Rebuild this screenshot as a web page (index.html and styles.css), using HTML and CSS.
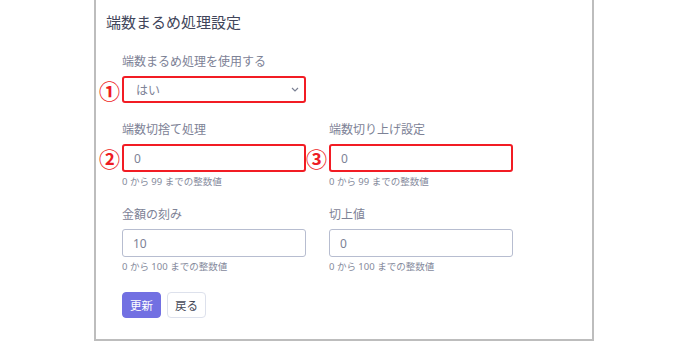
FILE: index.html
```html
<!DOCTYPE html>
<html lang="ja">
<head>
    <meta charset="UTF-8">
    <meta name="viewport" content="width=device-width, initial-scale=1.0">
    <title>端数まるめ処理設定</title>
    <link rel="stylesheet" href="styles.css">
</head>
<body>
    <div class="panel">
        <h1 class="title">端数まるめ処理設定</h1>
        <form class="form">
            <div class="row">
                <div class="field">
                    <label class="label">端数まるめ処理を使用する</label>
                    <div class="control">
                        <span class="mark">①</span>
                        <div class="select marked">
                            <span>はい</span>
                            <svg class="chevron" width="8" height="5" viewBox="0 0 8 5"><path d="M1 1l3 3 3-3" fill="none" stroke="#7b8194" stroke-width="1.2"/></svg>
                        </div>
                    </div>
                </div>
            </div>
            <div class="row">
                <div class="field">
                    <label class="label">端数切捨て処理</label>
                    <div class="control">
                        <span class="mark">②</span>
                        <input class="input marked" type="text" value="0">
                    </div>
                    <p class="hint">0 から 99 までの整数値</p>
                </div>
                <div class="field">
                    <label class="label">端数切り上げ設定</label>
                    <div class="control">
                        <span class="mark">③</span>
                        <input class="input marked" type="text" value="0">
                    </div>
                    <p class="hint">0 から 99 までの整数値</p>
                </div>
            </div>
            <div class="row">
                <div class="field">
                    <label class="label">金額の刻み</label>
                    <div class="control">
                        <input class="input" type="text" value="10">
                    </div>
                    <p class="hint">0 から 100 までの整数値</p>
                </div>
                <div class="field">
                    <label class="label">切上値</label>
                    <div class="control">
                        <input class="input" type="text" value="0">
                    </div>
                    <p class="hint">0 から 100 までの整数値</p>
                </div>
            </div>
            <div class="actions">
                <button type="button" class="btn primary">更新</button>
                <button type="button" class="btn">戻る</button>
            </div>
        </form>
    </div>
</body>
</html>
```

FILE: styles.css
```css
body {
    margin: 0;
    padding: 0;
    background-color: #fff;
    font-family: "Noto Sans", "Noto Sans CJK JP", sans-serif;
}

.panel {
    box-sizing: border-box;
    margin-left: 94px;
    width: 500px;
    height: 341px;
    border: 2px solid #bdbdbd;
    border-top: none;
}

.title {
    margin: 0;
    padding: 12px 10px 0;
    font-size: 15px;
    line-height: 20px;
    font-weight: normal;
    color: #41455a;
}

.form {
    padding: 22px 26px 0;
}

.row {
    display: grid;
    grid-template-columns: 184px 184px;
    column-gap: 23px;
    margin-bottom: 18px;
}

.row:first-child {
    margin-bottom: 19px;
}

.label {
    display: block;
    font-size: 12px;
    line-height: 16px;
    color: #7d8296;
    margin-bottom: 6px;
}

.control {
    position: relative;
}

.mark {
    position: absolute;
    left: -23px;
    top: 50%;
    transform: translateY(-50%);
    font-family: "Noto Sans CJK JP", sans-serif;
    font-size: 21px;
    font-weight: bold;
    line-height: 22px;
    color: #ee1c24;
}

.input, .select {
    box-sizing: border-box;
    display: flex;
    align-items: center;
    width: 184px;
    height: 28px;
    margin: 0;
    padding: 0 10px;
    border: 1px solid #b7bdd0;
    border-radius: 3px;
    font-family: inherit;
    font-size: 12px;
    color: #7d8296;
    background-color: #fff;
}

.select {
    justify-content: space-between;
    height: 27px;
    padding: 0 5px 0 12px;
}

.marked {
    border: 2px solid #f21c24;
}

.hint {
    margin: 3px 0 0;
    font-size: 9.5px;
    line-height: 14px;
    color: #858a9c;
}

.actions {
    display: flex;
    gap: 6px;
}

.btn {
    height: 26px;
    padding: 0 7px;
    border: 1px solid #dde1ec;
    border-radius: 4px;
    background-color: #fff;
    font-family: inherit;
    font-size: 11.5px;
    color: #444857;
    cursor: pointer;
}

.btn.primary {
    border-color: #7270e2;
    background-color: #7270e2;
    color: #fff;
}
```
